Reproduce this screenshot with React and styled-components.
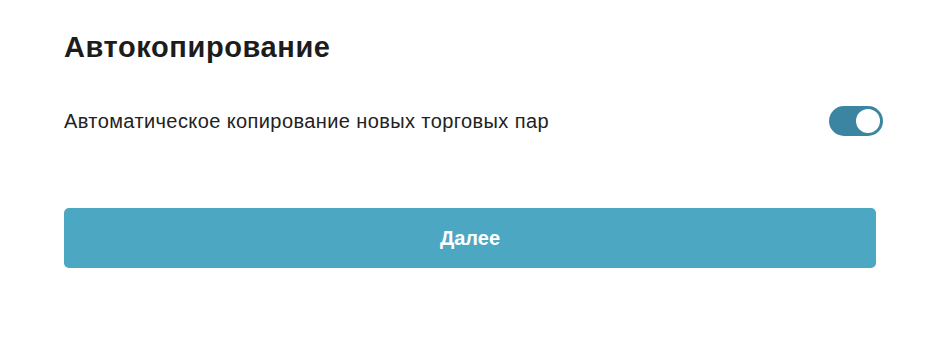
import { useState } from 'react';
import styled, { createGlobalStyle } from 'styled-components';

const GlobalStyle = createGlobalStyle`
  body {
    margin: 0;
    background: #ffffff;
    font-family: "Liberation Sans", Arial, sans-serif;
  }
`;

const Page = styled.div`
  padding: 29px 0 0 64px;
  width: 812px;
`;

const Title = styled.h2`
  margin: 0;
  font-size: 29px;
  font-weight: 700;
  letter-spacing: 0.6px;
  line-height: 36px;
  color: #1c1c1c;
`;

const Row = styled.div`
  display: flex;
  align-items: center;
  justify-content: space-between;
  width: 819px;
  margin-top: 41px;
`;

const Label = styled.span`
  font-size: 20px;
  letter-spacing: 0.4px;
  color: #222222;
`;

const Track = styled.button`
  position: relative;
  width: 54px;
  height: 30px;
  padding: 0;
  border: none;
  border-radius: 15px;
  background: ${(p) => (p.on ? '#3b85a2' : '#c7cdd1')};
  cursor: pointer;
`;

const Knob = styled.span`
  position: absolute;
  top: 3px;
  left: ${(p) => (p.on ? '27px' : '3px')};
  width: 24px;
  height: 24px;
  border-radius: 50%;
  background: #ffffff;
  transition: left 0.15s;
`;

const NextButton = styled.button`
  display: block;
  width: 812px;
  height: 60px;
  margin-top: 72px;
  border: none;
  border-radius: 5px;
  background: #4ca7c3;
  color: #ffffff;
  font-family: inherit;
  font-size: 20px;
  font-weight: 700;
  cursor: pointer;
`;

export default function App() {
  const [auto, setAuto] = useState(true);

  return (
    <>
      <GlobalStyle />
      <Page>
        <Title>Автокопирование</Title>
        <Row>
          <Label>Автоматическое копирование новых торговых пар</Label>
          <Track on={auto ? 1 : 0} onClick={() => setAuto(!auto)}>
            <Knob on={auto ? 1 : 0} />
          </Track>
        </Row>
        <NextButton>Далее</NextButton>
      </Page>
    </>
  );
}
